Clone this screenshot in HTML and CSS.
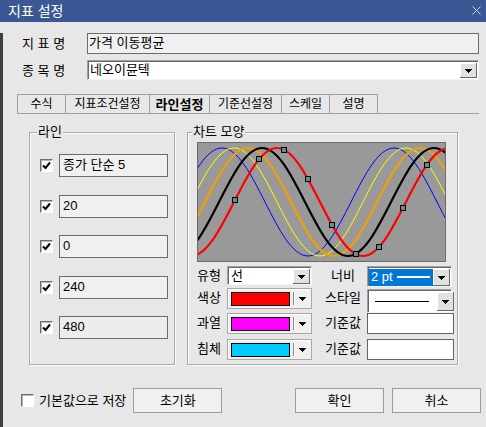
FILE: index.html
```html
<!DOCTYPE html>
<html lang="ko">
<head>
<meta charset="utf-8">
<title>지표 설정</title>
<link rel="stylesheet" href="styles.css">
</head>
<body>
<div class="window">
  <div class="titlebar">
    <span class="title">지표 설정</span>
    <svg class="close" width="9" height="9" viewBox="0 0 9 9"><path d="M0.5 0.5L8.5 8.5M8.5 0.5L0.5 8.5" stroke="#c3cde2" stroke-width="1" fill="none"/></svg>
  </div>
  <div class="frame">
    <div class="field-row r1">
      <span class="row-label">지 표 명</span>
      <div class="textbox">가격 이동평균</div>
    </div>
    <div class="field-row r2">
      <span class="row-label">종 목 명</span>
      <div class="combo wide">
        <span class="combo-text">네오이뮨텍</span>
        <span class="ddbtn"><svg width="7" height="4" viewBox="0 0 7 4" shape-rendering="crispEdges"><path d="M0 0h7L3.5 4z"/></svg></span>
      </div>
    </div>

    <div class="tabs">
      <span class="tab w49">수식</span>
      <span class="tab w85">지표조건설정</span>
      <span class="tab w61 active">라인설정</span>
      <span class="tab w73">기준선설정</span>
      <span class="tab w49">스케일</span>
      <span class="tab w49">설명</span>
    </div>

    <div class="panel">
      <div class="group lines">
        <span class="group-title t-line">라인</span>
        <div class="line-list">
          <div class="line-row">
            <span class="check"><svg width="11" height="11" viewBox="0 0 11 11"><path d="M2 5.5L4.5 8L9 2.5" stroke="#000" stroke-width="2" fill="none"/></svg></span>
            <div class="line-input">종가 단순 5</div>
          </div>
          <div class="line-row">
            <span class="check"><svg width="11" height="11" viewBox="0 0 11 11"><path d="M2 5.5L4.5 8L9 2.5" stroke="#000" stroke-width="2" fill="none"/></svg></span>
            <div class="line-input">20</div>
          </div>
          <div class="line-row">
            <span class="check"><svg width="11" height="11" viewBox="0 0 11 11"><path d="M2 5.5L4.5 8L9 2.5" stroke="#000" stroke-width="2" fill="none"/></svg></span>
            <div class="line-input">0</div>
          </div>
          <div class="line-row">
            <span class="check"><svg width="11" height="11" viewBox="0 0 11 11"><path d="M2 5.5L4.5 8L9 2.5" stroke="#000" stroke-width="2" fill="none"/></svg></span>
            <div class="line-input">240</div>
          </div>
          <div class="line-row">
            <span class="check"><svg width="11" height="11" viewBox="0 0 11 11"><path d="M2 5.5L4.5 8L9 2.5" stroke="#000" stroke-width="2" fill="none"/></svg></span>
            <div class="line-input dither">480</div>
          </div>
        </div>
      </div>

      <div class="group chart-group">
        <span class="group-title t-chart">차트 모양</span>
        <svg class="chart" width="249" height="120" viewBox="0 0 249 120">
          <defs>
            <path id="wave" fill="none" d="M-172,60c14.03,-27.66 27.44,-54 43,-54s28.97,26.34 43,54s27.44,54 43,54s28.97,-26.34 43,-54s27.44,-54 43,-54s28.97,26.34 43,54s27.44,54 43,54s28.97,-26.34 43,-54s27.44,-54 43,-54s28.97,26.34 43,54s27.44,54 43,54s28.97,-26.34 43,-54"/>
            <clipPath id="plot"><rect x="1" y="1" width="247" height="118"/></clipPath>
          </defs>
          <rect x="0.5" y="0.5" width="248" height="119" fill="#999999" stroke="#6b6b6b"/>
          <g clip-path="url(#plot)">
            <use href="#wave" transform="translate(-18 0)" stroke="#0000ff" stroke-width="1"/>
            <use href="#wave" transform="translate(-6 0)" stroke="#ffff00" stroke-width="1"/>
            <use href="#wave" transform="translate(8 0)" stroke="#f0a000" stroke-width="2.2"/>
            <use href="#wave" transform="translate(22 0)" stroke="#000000" stroke-width="2.2"/>
            <use href="#wave" transform="translate(37 0)" stroke="#ff0000" stroke-width="2.2"/>
            <g fill="#5c8f8f" stroke="#000" stroke-width="1">
              <rect x="35.5" y="55.5" width="5" height="5"/>
              <rect x="59.5" y="14.5" width="5" height="5"/>
              <rect x="84.5" y="5.5" width="5" height="5"/>
              <rect x="108.5" y="34.5" width="5" height="5"/>
              <rect x="132.5" y="80.5" width="5" height="5"/>
              <rect x="156.5" y="109.5" width="5" height="5"/>
              <rect x="179.5" y="102.5" width="5" height="5"/>
              <rect x="203.5" y="63.5" width="5" height="5"/>
              <rect x="227.5" y="20.5" width="5" height="5"/>
            </g>
          </g>
        </svg>

        <div class="props">
          <span class="plabel">유형</span>
          <div class="combo sunk type-combo">
            <span class="combo-text">선</span>
            <span class="ddbtn"><svg width="7" height="4" viewBox="0 0 7 4" shape-rendering="crispEdges"><path d="M0 0h7L3.5 4z"/></svg></span>
          </div>
          <span class="plabel right">너비</span>
          <div class="combo sunk width-combo">
            <span class="sel"><span class="sel-text">2 pt</span><span class="sel-line"></span></span>
            <span class="ddbtn"><svg width="7" height="4" viewBox="0 0 7 4" shape-rendering="crispEdges"><path d="M0 0h7L3.5 4z"/></svg></span>
          </div>

          <span class="plabel">색상</span>
          <div class="color-combo">
            <span class="swatch red"></span>
            <span class="sep"></span>
            <svg width="7" height="4" viewBox="0 0 7 4" shape-rendering="crispEdges"><path d="M0 0h7L3.5 4z"/></svg>
          </div>
          <span class="plabel right">스타일</span>
          <div class="combo sunk style-combo">
            <span class="style-line"></span>
            <span class="ddbtn tall"><svg width="7" height="4" viewBox="0 0 7 4" shape-rendering="crispEdges"><path d="M0 0h7L3.5 4z"/></svg></span>
          </div>

          <span class="plabel">과열</span>
          <div class="color-combo">
            <span class="swatch magenta"></span>
            <span class="sep"></span>
            <svg width="7" height="4" viewBox="0 0 7 4" shape-rendering="crispEdges"><path d="M0 0h7L3.5 4z"/></svg>
          </div>
          <span class="plabel right">기준값</span>
          <div class="value-box"></div>

          <span class="plabel">침체</span>
          <div class="color-combo">
            <span class="swatch cyan"></span>
            <span class="sep"></span>
            <svg width="7" height="4" viewBox="0 0 7 4" shape-rendering="crispEdges"><path d="M0 0h7L3.5 4z"/></svg>
          </div>
          <span class="plabel right">기준값</span>
          <div class="value-box"></div>
        </div>
      </div>
    </div>

    <div class="bottom">
      <span class="check empty"></span>
      <span class="save-label">기본값으로 저장</span>
      <button class="btn reset">초기화</button>
      <button class="btn ok">확인</button>
      <button class="btn cancel">취소</button>
    </div>
  </div>
</div>
</body>
</html>
```

FILE: styles.css
```css
* {
  box-sizing: border-box;
}

html,
body {
  margin: 0;
  padding: 0;
}

body {
  width: 486px;
  height: 427px;
  overflow: hidden;
  background: #e7e7e7;
  color: #000;
  font-family: "Liberation Sans", "Noto Sans CJK KR", sans-serif;
  font-size: 13px;
  line-height: 15px;
}

.window {
  width: 486px;
  height: 427px;
}

.titlebar {
  height: 22px;
  background: #3b5894;
  color: #fff;
  display: flex;
  align-items: center;
  justify-content: space-between;
  padding: 0 5px 0 8px;
  font-size: 14px;
}

.close {
  display: block;
  margin-top: -1px;
}

.frame {
  height: 405px;
  border-left: 3px solid #3b3e43;
  border-bottom: 4px solid #3b3e43;
}

/* top rows */
.field-row {
  display: flex;
  align-items: center;
  margin-left: 19px;
}

.r1 {
  margin-top: 11px;
  height: 21px;
}

.r2 {
  margin-top: 6px;
  height: 20px;
}

.row-label {
  width: 65px;
  flex: none;
}

.textbox {
  width: 392px;
  height: 21px;
  border: 1px solid #6b6b6b;
  background: #f0f0f0;
  padding-left: 1px;
  line-height: 18px;
}

/* combos */
.combo {
  display: flex;
  align-items: center;
  background: #fff;
  border: 1px solid;
  border-color: #a0a0a0 #f4f4f4 #f4f4f4 #a0a0a0;
  box-shadow: inset 1px 1px 0 #696969;
}

.combo.wide {
  width: 392px;
  height: 20px;
}

.combo-text {
  flex: 1;
  padding-left: 2px;
  line-height: 16px;
}

.ddbtn {
  width: 17px;
  height: 15px;
  margin-right: 1px;
  margin-top: 1px;
  background: #e1e1e1;
  box-shadow: inset -1px -1px 0 #696969, inset 1px 1px 0 #ffffff;
  display: flex;
  align-items: center;
  justify-content: center;
  flex: none;
}

.ddbtn svg {
  display: block;
  margin-top: 1px;
}

/* tabs */
.tabs {
  display: flex;
  margin: 14px 7px 0 14px;
  border-bottom: 1px solid #a0a0a0;
}

.tab {
  height: 19px;
  border: 1px solid #a0a0a0;
  border-bottom: none;
  margin-left: -1px;
  display: flex;
  align-items: center;
  justify-content: center;
  background: #e7e7e7;
  font-size: 12px;
}

.tab:first-child {
  margin-left: 0;
}

.tab.active {
  font-weight: bold;
  font-size: 13px;
}

.w49 { width: 49px; }
.w61 { width: 61px; }
.w73 { width: 73px; }
.w85 { width: 85px; }

/* panel & groups */
.panel {
  display: flex;
  gap: 12px;
  margin: 18px 0 0 26px;
}

.group {
  height: 233px;
  border: 1px solid #a9a9a9;
  box-shadow: 1px 1px 0 #fbfbfb, inset 1px 1px 0 #fbfbfb;
}

.lines {
  width: 146px;
}

.chart-group {
  width: 271px;
}

.group-title {
  display: block;
  width: fit-content;
  height: 14px;
  line-height: 14px;
  margin-top: -8px;
  padding: 0 1px;
  background: #e7e7e7;
  font-size: 13px;
}

.t-line {
  margin-left: 7px;
}

.t-chart {
  margin-left: 4px;
}

.line-list {
  display: flex;
  flex-direction: column;
  gap: 17.5px;
  margin: 15px 0 0 10px;
}

.line-row {
  display: flex;
  align-items: center;
  gap: 6px;
}

.check {
  width: 13px;
  height: 13px;
  flex: none;
  border: 1px solid;
  border-color: #6e6e6e #ffffff #ffffff #6e6e6e;
  box-shadow: inset 1px 1px 0 #b4b4b4;
  background: #fafafa;
  display: flex;
  align-items: center;
  justify-content: center;
}

.check svg {
  display: block;
}

.line-input {
  width: 109px;
  height: 23px;
  border: 1px solid #6b6b6b;
  background: #f0f0f0;
  padding-left: 3px;
  line-height: 20px;
}

.line-input.dither {
  background: repeating-conic-gradient(#f3f3f3 0 25%, #e6e6e6 0 50%) 0 0 / 2px 2px;
}

/* chart */
.chart {
  display: block;
  margin: 3px 0 0 9px;
}

/* property grid */
.props {
  display: grid;
  grid-template-columns: 26px 85px 47px 87px;
  grid-template-rows: 22px 25px 26px 21px;
  column-gap: 4px;
  margin: 4px 0 0 9px;
}

.plabel {
  height: 21px;
  line-height: 20px;
  align-self: start;
  white-space: nowrap;
}

.plabel.right {
  padding-left: 7px;
  text-align: center;
}

.sunk {
  align-self: start;
}

.type-combo {
  width: 85px;
  height: 19px;
}

.type-combo .combo-text {
  padding-left: 3px;
  line-height: 15px;
}

.type-combo .ddbtn {
  height: 15px;
  margin-top: 1px;
}

.width-combo {
  width: 85px;
  height: 21px;
}

.sel {
  flex: 1;
  height: 17px;
  margin: 1px 0 0 1px;
  background: #0078d7;
  color: #fff;
  display: flex;
  align-items: center;
  padding-left: 2px;
}

.sel-text {
  line-height: 14px;
}

.sel-line {
  width: 33px;
  height: 2px;
  background: #fff;
  margin-left: 4px;
}

.width-combo .ddbtn {
  height: 17px;
}

.style-combo {
  width: 85px;
  height: 24px;
  margin-top: 1px;
}

.style-line {
  flex: none;
  width: 54px;
  height: 1px;
  background: #000;
  margin: 1px 8px 0 7px;
}

.style-combo .ddbtn {
  height: 19px;
  margin-left: auto;
}

.color-combo {
  align-self: start;
  width: 85px;
  height: 21px;
  border: 1px solid #a8a8a8;
  background: #f0f0f0;
  box-shadow: inset 1px 1px 0 #ffffff;
  display: flex;
  align-items: center;
  padding-left: 3px;
}

.swatch {
  width: 59px;
  height: 14px;
  border: 1px solid #000;
  flex: none;
}

.red { background: #ff0000; }
.magenta { background: #ff00ff; }
.cyan { background: #00ccff; }

.sep {
  width: 2px;
  height: 13px;
  margin-left: 3px;
  border-left: 1px solid #8a8a8a;
  border-right: 1px solid #ffffff;
  flex: none;
}

.color-combo svg {
  display: block;
  margin-left: 4px;
}

.value-box {
  align-self: start;
  width: 87px;
  height: 21px;
  border: 1px solid #646464;
  background: #fff;
}

/* bottom */
.bottom {
  display: flex;
  align-items: center;
  margin-top: 23px;
  padding: 0 5px 0 18px;
  height: 25px;
}

.check.empty {
  background: #fff;
}

.save-label {
  margin-left: 5px;
  white-space: nowrap;
}

.btn {
  width: 89px;
  height: 25px;
  border: 1px solid #9c9c9c;
  background: #f0f0f0;
  font-family: "Liberation Sans", "Noto Sans CJK KR", sans-serif;
  font-size: 13px;
  color: #000;
  padding: 0;
  line-height: 15px;
}

.reset {
  margin-left: 7px;
}

.ok {
  margin-left: auto;
}

.cancel {
  margin-left: 8px;
}
```
